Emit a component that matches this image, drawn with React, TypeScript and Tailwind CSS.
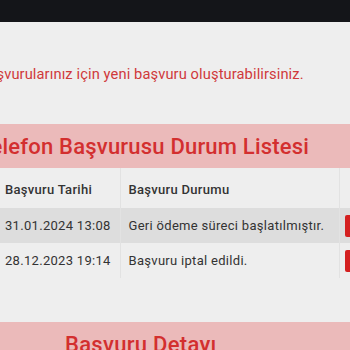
const rows = [
  { date: '31.01.2024 13:08', status: 'Geri ödeme süreci başlatılmıştır.' },
  { date: '28.12.2023 19:14', status: 'Başvuru iptal edildi.' },
]

export default function App() {
  return (
    <div className="w-[350px] h-[350px] overflow-hidden bg-[#eeeeee] font-['Roboto',sans-serif]">
      <div className="h-[22px] bg-[#141519]" />
      <p className="mt-[42px] -ml-[69px] whitespace-nowrap text-[14.7px] leading-[20px] text-[#d0393b] tracking-[0.1px]">
        Önceki başvurularınız için yeni başvuru oluşturabilirsiniz.
      </p>
      <div className="mt-[40px] h-[44px] bg-[#ebbaba] flex items-center -ml-[22px] w-[400px]">
        <h2 className="text-[22px] font-medium text-[#d32f2f] whitespace-nowrap tracking-[0.2px]">
          Telefon Başvurusu Durum Listesi
        </h2>
      </div>
      <table className="w-[400px] border-collapse text-[13px] text-[#333333] tracking-[0.3px]">
        <thead>
          <tr className="h-[40px]">
            <th className="w-[120px] text-left font-medium pl-[5px] pt-[4px] border-r border-[#e2e2e2]">Başvuru Tarihi</th>
            <th className="w-[219px] text-left font-medium pl-[8px] pt-[4px] border-r border-[#e2e2e2]">Başvuru Durumu</th>
            <th />
          </tr>
        </thead>
        <tbody>
          {rows.map((r, i) => (
            <tr key={r.date} className={i === 0 ? 'h-[35px] bg-[#dddddd]' : 'h-[35px] bg-[#eeeeee]'}>
              <td className="pl-[5px] border-r border-[#e2e2e2] whitespace-nowrap">{r.date}</td>
              <td className="pl-[8px] border-r border-[#e2e2e2] whitespace-nowrap">{r.status}</td>
              <td className="pl-[5px]">
                <div className="w-[30px] h-[22px] bg-[#d42020] rounded-[2px]" />
              </td>
            </tr>
          ))}
        </tbody>
      </table>
      <div className="mt-[44px] h-[40px] bg-[#ebbaba] flex items-start pl-[65px] pt-[6px]">
        <h2 className="text-[22px] font-medium text-[#d32f2f] whitespace-nowrap tracking-[0.3px]">Başvuru Detayı</h2>
      </div>
    </div>
  )
}
